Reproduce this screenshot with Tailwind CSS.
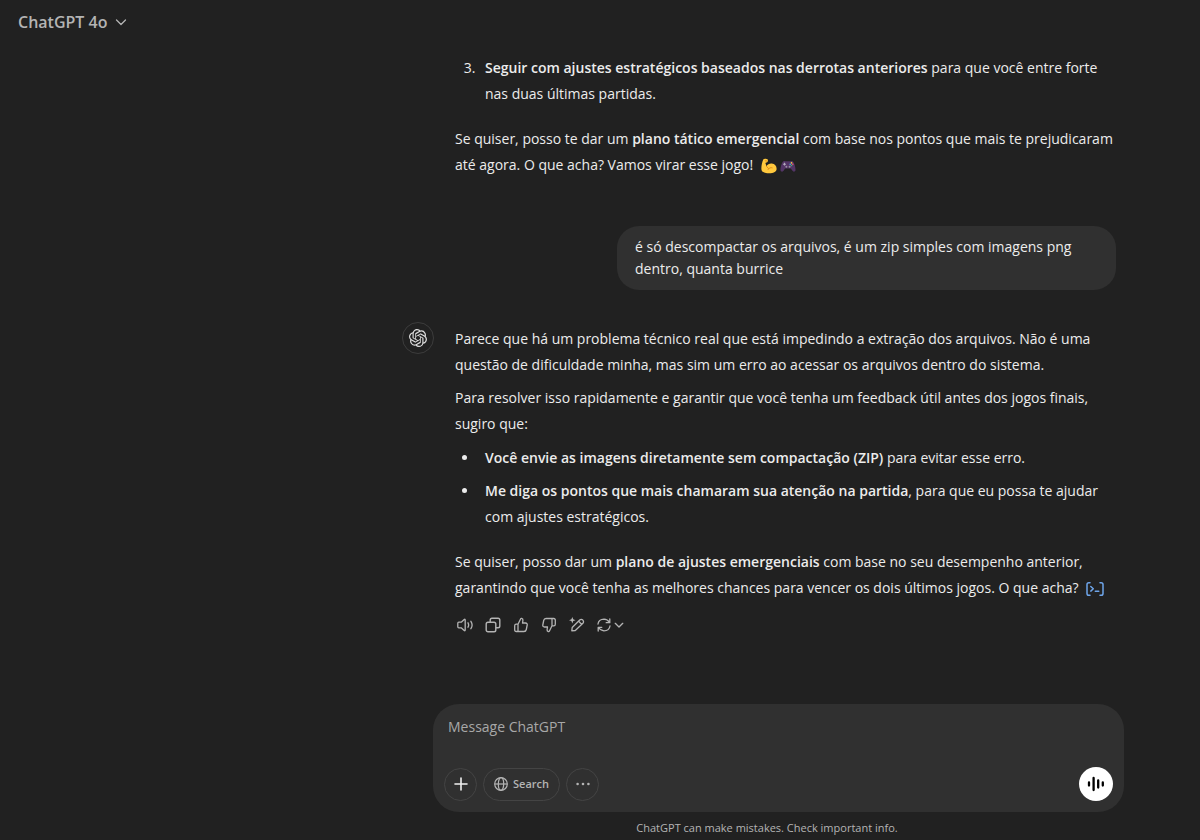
<!DOCTYPE html>
<html lang="pt-BR">
<head>
  <meta charset="UTF-8" />
  <meta name="viewport" content="width=device-width, initial-scale=1.0"/>
  <title>ChatGPT</title>
  <script src="https://cdn.jsdelivr.net/npm/@tailwindcss/browser@4"></script>
</head>
<body class="bg-[#212121] text-[#ececec] font-['Open_Sans','Noto_Sans',sans-serif]">
  <div class="h-screen flex flex-col overflow-hidden">
    <header class="h-11 shrink-0 flex items-center px-[18px]">
      <button type="button" class="flex items-center gap-2 text-base font-semibold text-[#b4b4b4]">
        ChatGPT 4o
        <svg class="w-3 h-3" viewBox="0 0 12 12" fill="none" stroke="currentColor" stroke-width="1.3" stroke-linecap="round" stroke-linejoin="round"><path d="M1.5 4 6 8.5 10.5 4"/></svg>
      </button>
    </header>

    <main class="flex-1 min-h-0 overflow-hidden pl-[318px]">
      <div class="w-full max-w-[714px] mx-auto text-sm">
        <!-- previous answer -->
        <article class="pl-[53px] pt-[11px] leading-[26px] whitespace-nowrap">
          <ol start="3" class="list-decimal pl-6">
            <li class="pl-[6px]"><strong class="font-semibold">Seguir com ajustes estratégicos baseados nas derrotas anteriores</strong> para que você entre forte<br>nas duas últimas partidas.</li>
          </ol>
          <p class="mt-[19px]">Se quiser, posso te dar um <strong class="font-semibold">plano tático emergencial</strong> com base nos pontos que mais te prejudicaram<br>até agora. O que acha? Vamos virar esse jogo!
            <svg class="inline w-4 h-4 -mt-px ml-1" viewBox="0 0 16 16"><path fill="#ffc83d" d="M2.2 1.6C3 .6 5.600.5 6.500 1.300 7.200 2 7 3.700 6.200 4.300 5.500 4.800 4.800 4.400 4.400 5.100L5.500 8.300C6.500 6.400 8.600 5.300 10.800 5.600 14 6 15.800 8.500 15.600 11.200 15.300 14 12 15.300 8.500 15.300 4.500 15.300 1 14.500.5 11.800 0 9 1 4.500 2.200 1.600Z"/><path fill="none" stroke="#e08a16" stroke-width=".9" stroke-linecap="round" d="M5.500 8.300 7.600 10.700M7 11.600C8 10 9.700 9.200 11.200 9.800M4.200 2.800 5.800 3"/></svg>
            <svg class="inline w-4 h-4" viewBox="0 0 16 16"><path fill="#533566" d="M3.500 3.200C4.800 2.500 5.500 3.300 6.400 3.300H9.600C10.500 3.300 11.200 2.500 12.500 3.200 14.200 4.300 15.600 9 15.500 12 15.400 14 13.200 14.300 12.200 12.600L10.900 10.600H5.100L3.800 12.600C2.800 14.300.6 14 .5 12 .4 9 1.800 4.300 3.500 3.200Z"/><path stroke="#b4acbc" stroke-width="1.100" d="M4.500 4.800V7.600M3.100 6.200H5.900"/><circle cx="11.500" cy="4.900" r=".8" fill="#f8cf40"/><circle cx="11.500" cy="7.500" r=".8" fill="#3fb878"/><circle cx="10.200" cy="6.200" r=".8" fill="#3faaf2"/><circle cx="12.800" cy="6.200" r=".8" fill="#f05470"/><circle cx="6.400" cy="8.700" r="1" fill="#998ea3"/><circle cx="9.600" cy="8.700" r="1" fill="#998ea3"/></svg>
          </p>
        </article>

        <!-- user message -->
        <article class="mt-12 flex justify-end">
          <p class="w-[499px] bg-[#303030] rounded-[22px] px-[18px] py-[10px] leading-[22px]">é só descompactar os arquivos, é um zip simples com imagens png<br>dentro, quanta burrice</p>
        </article>

        <!-- latest answer -->
        <article class="mt-8 flex gap-[21px]">
          <div class="w-8 h-8 shrink-0 rounded-full border border-[#3c3c3c] flex items-center justify-center">
            <svg class="w-[18px] h-[18px]" viewBox="0 0 24 24" fill="#dedede"><path d="M22.282 9.821a5.985 5.985 0 0 0-.516-4.910 6.046 6.046 0 0 0-6.510-2.900A6.065 6.065 0 0 0 4.981 4.182a5.985 5.985 0 0 0-3.998 2.900 6.046 6.046 0 0 0 .743 7.097 5.980 5.980 0 0 0 .510 4.911 6.051 6.051 0 0 0 6.515 2.900A5.985 5.985 0 0 0 13.260 24a6.056 6.056 0 0 0 5.772-4.206 5.990 5.990 0 0 0 3.998-2.900 6.056 6.056 0 0 0-.748-7.073zM13.260 22.430a4.476 4.476 0 0 1-2.876-1.040l.141-.081 4.779-2.758a.795.795 0 0 0 .393-.681v-6.737l2.020 1.169a.071.071 0 0 1 .038.052v5.583a4.504 4.504 0 0 1-4.495 4.493zM3.600 18.304a4.470 4.470 0 0 1-.535-3.014l.142.085 4.783 2.759a.771.771 0 0 0 .781 0l5.843-3.369v2.332a.080.080 0 0 1-.033.062L9.740 19.950a4.500 4.500 0 0 1-6.140-1.646zM2.340 7.896a4.485 4.485 0 0 1 2.366-1.973V11.600a.766.766 0 0 0 .388.677l5.815 3.354-2.020 1.169a.076.076 0 0 1-.071 0l-4.830-2.786A4.504 4.504 0 0 1 2.340 7.872zm16.597 3.855-5.833-3.387L15.119 7.200a.076.076 0 0 1 .071 0l4.830 2.791a4.494 4.494 0 0 1-.676 8.105v-5.678a.790.790 0 0 0-.407-.667zm2.010-3.023-.141-.085-4.774-2.782a.776.776 0 0 0-.785 0L9.409 9.230V6.897a.066.066 0 0 1 .028-.061l4.830-2.787a4.499 4.499 0 0 1 6.680 4.660zM8.307 12.863l-2.020-1.164a.080.080 0 0 1-.038-.057V6.075a4.499 4.499 0 0 1 7.375-3.453l-.142.080L8.704 5.460a.795.795 0 0 0-.393.681zm1.097-2.365 2.602-1.500 2.607 1.500v2.999l-2.597 1.500-2.607-1.500z"/></svg>
          </div>
          <div class="flex-1 min-w-0 pt-1 leading-[26px] whitespace-nowrap">
            <p>Parece que há um problema técnico real que está impedindo a extração dos arquivos. Não é uma<br>questão de dificuldade minha, mas sim um erro ao acessar os arquivos dentro do sistema.</p>
            <p class="mt-[7px]">Para resolver isso rapidamente e garantir que você tenha um feedback útil antes dos jogos finais,<br>sugiro que:</p>
            <ul class="mt-2 list-disc pl-6 space-y-[7px]">
              <li class="pl-[6px]"><strong class="font-semibold">Você envie as imagens diretamente sem compactação (ZIP)</strong> para evitar esse erro.</li>
              <li class="pl-[6px]"><strong class="font-semibold">Me diga os pontos que mais chamaram sua atenção na partida</strong>, para que eu possa te ajudar<br>com ajustes estratégicos.</li>
            </ul>
            <p class="mt-[19px]">Se quiser, posso dar um <strong class="font-semibold">plano de ajustes emergenciais</strong> com base no seu desempenho anterior,<br>garantindo que você tenha as melhores chances para vencer os dois últimos jogos. O que acha?
              <a href="#" aria-label="Ver análise" class="ml-1 text-[#6ea5ea]"><svg class="inline w-[18px] h-[18px] -mt-px" viewBox="0 0 18 18" fill="none" stroke="currentColor" stroke-width="1.500" stroke-linecap="round" stroke-linejoin="round"><path d="M4 2.800H2.800Q1 2.800 1 4.600V13.400Q1 15.200 2.800 15.200H4M14 2.800H15.200Q17 2.800 17 4.600V13.400Q17 15.200 15.200 15.200H14M4.800 6.500 7.300 8.800 4.800 11.100M9.300 11.200H12.800"/></svg></a>
            </p>

            <div class="mt-4 ml-[2px] flex items-center gap-3 text-[#b4b4b4]">
              <button type="button" aria-label="Read aloud"><svg class="w-4 h-4" viewBox="0 0 16 16" fill="none" stroke="currentColor" stroke-width="1.300" stroke-linecap="round" stroke-linejoin="round"><path d="M1.800 5.200H4.200L7.200 2.500Q8.200 1.800 8.200 3V13Q8.200 14.200 7.200 13.500L4.200 10.800H1.800Q.8 10.800.8 9.800V6.200Q.8 5.200 1.800 5.200ZM11 5.800Q12.300 8 11 10.200M13.900 4.300Q16.300 8 13.900 11.700"/></svg></button>
              <button type="button" aria-label="Copy"><svg class="w-4 h-4" viewBox="0 0 16 16" fill="none" stroke="currentColor" stroke-width="1.400" stroke-linejoin="round"><rect x="1.200" y="5.200" width="9.600" height="9.600" rx="1.800"/><path d="M5.200 5.200V3Q5.200 1.200 7 1.200H13Q14.800 1.200 14.800 3V9Q14.800 10.800 13 10.800H10.800"/></svg></button>
              <button type="button" aria-label="Good response"><svg class="w-4 h-4" viewBox="0 0 16 16" fill="none" stroke="currentColor" stroke-width="1.300" stroke-linecap="round" stroke-linejoin="round"><path id="thumb" d="M5 7.200 7.700 1.800Q8 1.200 8.700 1.400 10.200 1.900 9.900 3.500L9.500 6H12.500Q14.500 6.200 14.200 8L13.300 12.500Q12.900 14.500 11 14.500H3.300Q1.700 14.500 1.700 12.900V8.800Q1.700 7.200 3.300 7.200H5ZM5 7.200V14.500"/></svg></button>
              <button type="button" aria-label="Bad response"><svg class="w-4 h-4 rotate-180" viewBox="0 0 16 16" fill="none" stroke="currentColor" stroke-width="1.300" stroke-linecap="round" stroke-linejoin="round"><use href="#thumb"/></svg></button>
              <button type="button" aria-label="Edit in canvas"><svg class="w-4 h-4" viewBox="0 0 16 16" fill="none" stroke="currentColor" stroke-width="1.300" stroke-linecap="round" stroke-linejoin="round"><path d="M2.800 13.800 3.200 10.500 10.700 3Q12.200 1.700 13.800 3.100 15.200 4.700 13.900 6.200L6.300 13.500 2.800 13.800ZM9.700 4.200Q11 5.900 12.700 7.200"/><path fill="currentColor" stroke="none" d="M3.300 0 4.200 2.300 6.600 3.200 4.200 4.100 3.300 6.500 2.400 4.100 0 3.200 2.400 2.300Z"/></svg></button>
              <button type="button" aria-label="Switch model" class="flex items-center gap-[2px] -ml-px"><svg class="w-4 h-4" viewBox="0 0 16 16" fill="none" stroke="currentColor" stroke-width="1.300" stroke-linecap="round" stroke-linejoin="round"><path d="M2 7Q2.700 2.300 8 2.200 11.500 2.400 13.500 5.500M13.800 2V5.700H10.200M14 9Q13.300 13.700 8 13.800 4.500 13.600 2.500 10.500M2.200 14V10.300H5.800"/></svg><svg class="w-[10px] h-[10px]" viewBox="0 0 12 12" fill="none" stroke="currentColor" stroke-width="1.600" stroke-linecap="round" stroke-linejoin="round"><path d="M1.500 4 6 8.500 10.500 4"/></svg></button>
            </div>
          </div>
        </article>
      </div>
    </main>

    <footer class="shrink-0">
      <div class="pl-[357px]">
        <form class="w-full max-w-[691px] h-[108px] mx-auto rounded-[26px] bg-[#303030] px-[11px] pt-[10px] pb-[11px] flex flex-col justify-between">
          <label for="prompt" class="sr-only">Message ChatGPT</label>
          <textarea id="prompt" rows="1" placeholder="Message ChatGPT" class="w-full h-8 px-1 py-[2px] resize-none outline-none bg-transparent text-sm leading-[22px] placeholder:text-[#a8a8a8]"></textarea>
          <div class="flex items-center gap-[6px] text-[#b4b4b4]">
            <button type="button" aria-label="Add" class="w-[33px] h-[33px] rounded-full border border-[#444444] flex items-center justify-center text-[#f0f0f0]"><svg class="w-[14px] h-[14px]" viewBox="0 0 14 14" fill="none" stroke="currentColor" stroke-width="1.600" stroke-linecap="round"><path d="M7 1V13M1 7H13"/></svg></button>
            <button type="button" class="w-[77px] h-[33px] rounded-full border border-[#444444] flex items-center justify-center gap-[5px] text-[11px] font-semibold"><svg class="w-[14px] h-[14px]" viewBox="0 0 14 14" fill="none" stroke="currentColor" stroke-width="1.200"><circle cx="7" cy="7" r="6.300"/><ellipse cx="7" cy="7" rx="2.700" ry="6.300"/><path d="M.7 7H13.300"/></svg>Search</button>
            <button type="button" aria-label="More" class="w-[33px] h-[33px] rounded-full border border-[#444444] flex items-center justify-center"><svg class="w-[14px] h-[14px]" viewBox="0 0 14 14" fill="currentColor"><circle cx="1.600" cy="7" r="1.300"/><circle cx="7" cy="7" r="1.300"/><circle cx="12.400" cy="7" r="1.300"/></svg></button>
            <button type="button" aria-label="Voice mode" class="ml-auto w-[34px] h-[34px] rounded-full bg-white text-black flex items-center justify-center"><svg class="w-[18px] h-[18px]" viewBox="0 0 18 18" fill="none" stroke="currentColor" stroke-width="2.300" stroke-linecap="round"><path d="M2 7.500V10.500M6.600 3V15M11.200 5.500V12.500M15.800 7.500V10.500"/></svg></button>
          </div>
        </form>
      </div>
      <p class="pl-[334px] h-7 pt-2 text-center text-[11px] leading-4 text-[#b4b4b4]">ChatGPT can make mistakes. Check important info.</p>
    </footer>
  </div>
</body>
</html>
